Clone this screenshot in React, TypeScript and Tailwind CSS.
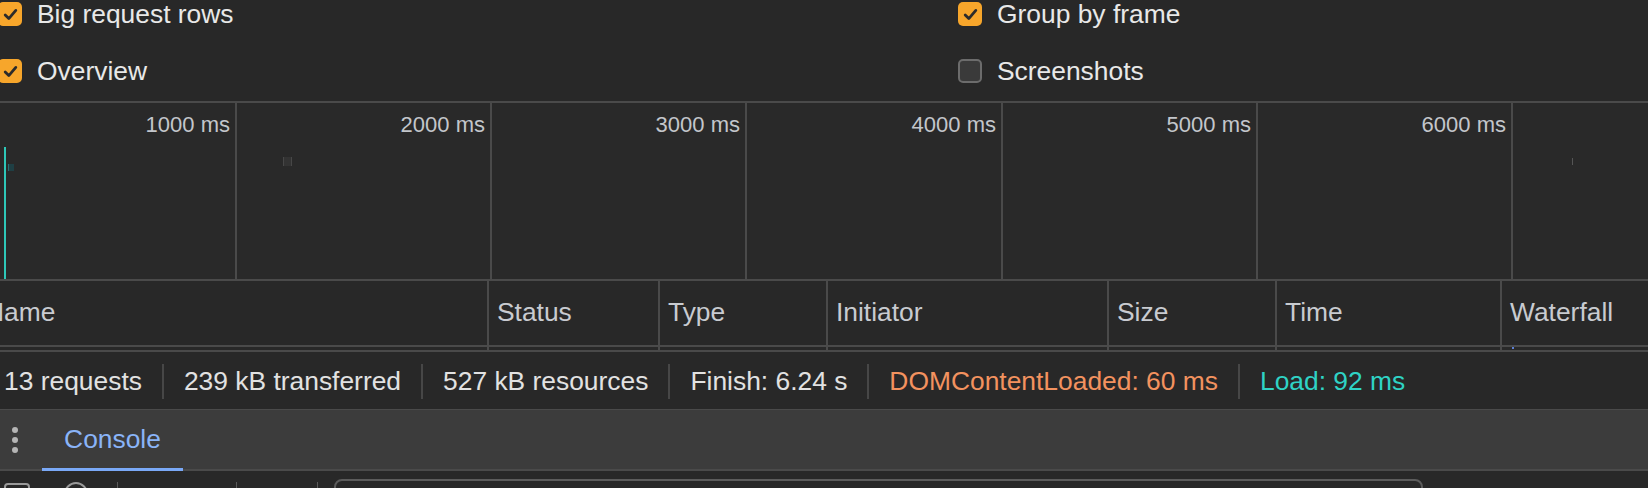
import React from "react";

function Box({ checked }: { checked: boolean }) {
  if (checked) {
    return (
      <div className="w-[24px] h-[24px] shrink-0 rounded-[5px] bg-[#f7a62b] flex items-center justify-center">
        <svg width="17" height="17" viewBox="0 0 17 17">
          <path d="M3.2 9 L6.8 12.6 L13.8 4.4" stroke="#2b2b2b" strokeWidth="2.8" fill="none" strokeLinecap="round" strokeLinejoin="round" />
        </svg>
      </div>
    );
  }
  return <div className="w-[24px] h-[24px] shrink-0 rounded-[5px] bg-[#3a3a3a] border-2 border-[#6c6c6c]" />;
}

function Opt({ checked, label }: { checked: boolean; label: string }) {
  return (
    <div className="h-[28px] flex items-center gap-[15px]">
      <Box checked={checked} />
      <span className="text-[26.4px] leading-[28px] text-[#e8e8e8] whitespace-nowrap">{label}</span>
    </div>
  );
}

const ticks = [
  { w: "w-[237px]", label: "1000 ms" },
  { w: "w-[255px]", label: "2000 ms" },
  { w: "w-[255px]", label: "3000 ms" },
  { w: "w-[256px]", label: "4000 ms" },
  { w: "w-[255px]", label: "5000 ms" },
  { w: "w-[255px]", label: "6000 ms" },
];

const cols = [
  { w: "w-[489px]", label: "Name", first: true },
  { w: "w-[171px]", label: "Status" },
  { w: "w-[168px]", label: "Type" },
  { w: "w-[281px]", label: "Initiator" },
  { w: "w-[168px]", label: "Size" },
  { w: "w-[225px]", label: "Time" },
];

function Sep() {
  return <div className="w-[2px] h-[35px] bg-[#474747] shrink-0" />;
}

export default function App() {
  return (
    <div className="w-[1648px] h-[488px] overflow-hidden bg-[#282828] font-['Liberation_Sans',Arial,sans-serif] relative">
      {/* settings */}
      <div className="h-[101px] flex">
        <div className="w-[960px] ml-[-2px] flex flex-col gap-[29px]">
          <Opt checked label="Big request rows" />
          <Opt checked label="Overview" />
        </div>
        <div className="flex flex-col gap-[29px]">
          <Opt checked label="Group by frame" />
          <Opt checked={false} label="Screenshots" />
        </div>
      </div>

      {/* overview */}
      <div className="h-[180px] border-y-2 border-[#4a4a4a] bg-[#292929] flex relative">
        {ticks.map((t) => (
          <div key={t.label} className={`${t.w} shrink-0 h-full border-r-2 border-[#4a4a4a] pt-[9px] pr-[5px] text-right text-[22px] leading-[26px] text-[#c3c6cb]`}>
            {t.label}
          </div>
        ))}
        <div className="flex-1" />
        <div className="absolute left-[4px] top-[44px] bottom-0 w-[2px] bg-[#2ec7b8]" />
        <div className="absolute left-[8px] top-[61px] w-[6px] h-[7px] bg-[#1f3f44] border-l border-[#2b6e72]" />
        <div className="absolute left-[283px] top-[54px] w-[9px] h-[9px] bg-[#333] border-x border-[#474747]" />
        <div className="absolute left-[1572px] top-[55px] w-[1px] h-[7px] bg-[#555]" />
      </div>

      {/* table header */}
      <div className="flex h-[66px] border-b-2 border-[#4a4a4a]">
        {cols.map((c) => (
          <div key={c.label} className={`${c.w} shrink-0 border-r-2 border-[#4a4a4a] flex items-center ${c.first ? "pl-0" : "pl-[8px]"} overflow-hidden`}>
            <span className={`text-[26.4px] text-[#c8cbd0] whitespace-nowrap ${c.first ? "ml-[-15px]" : ""}`}>{c.label}</span>
          </div>
        ))}
        <div className="flex-1 flex items-center pl-[8px]">
          <span className="text-[26.4px] text-[#c8cbd0] whitespace-nowrap">Waterfall</span>
        </div>
      </div>
      <div className="flex h-[5px] border-b-2 border-[#4a4a4a] relative">
        {cols.map((c) => (
          <div key={c.label} className={`${c.w} shrink-0 border-r-2 border-[#4a4a4a] h-full`} />
        ))}
        <div className="absolute left-[1512px] top-0 w-[2px] h-[2px] bg-[#5b7fd6]" />
      </div>

      {/* status bar */}
      <div className="h-[57px] pt-[2px] flex items-center text-[26.4px] text-[#e2e2e2] whitespace-nowrap">
        <span className="pl-[4px] pr-[20px]">13 requests</span>
        <Sep />
        <span className="px-[20px]">239 kB transferred</span>
        <Sep />
        <span className="px-[20px]">527 kB resources</span>
        <Sep />
        <span className="px-[20px]">Finish: 6.24 s</span>
        <Sep />
        <span className="px-[20px] text-[#f3925f]">DOMContentLoaded: 60 ms</span>
        <Sep />
        <span className="px-[20px] text-[#2fd3c5]">Load: 92 ms</span>
      </div>

      {/* drawer tab bar */}
      <div className="h-[62px] border-t border-b-2 border-t-[#4a4a4a] border-b-[#4a4a4a] bg-[#3c3c3c] flex items-stretch">
        <div className="w-[42px] flex flex-col items-center justify-center gap-[4px] pr-[12px]">
          <div className="w-[6px] h-[6px] rounded-full bg-[#b5b5b5]" />
          <div className="w-[6px] h-[6px] rounded-full bg-[#b5b5b5]" />
          <div className="w-[6px] h-[6px] rounded-full bg-[#b5b5b5]" />
        </div>
        <div className="relative w-[141px] flex items-center justify-center pt-[1px]">
          <span className="text-[26.4px] text-[#8ab4f8]">Console</span>
          <div className="absolute left-0 right-0 bottom-[-2px] h-[3px] bg-[#7aa9f7]" />
        </div>
      </div>

      {/* console toolbar */}
      <div className="h-[40px] flex items-start">
        <div className="w-[26px] h-[22px] mt-[12px] ml-[4px] rounded-[4px] border-2 border-[#9a9a9a] shrink-0" />
        <div className="w-[24px] h-[24px] mt-[11px] ml-[34px] rounded-full border-2 border-[#9a9a9a] shrink-0" />
        <div className="w-[1px] h-[24px] mt-[11px] ml-[29px] bg-[#5a5a5a] shrink-0" />
        <div className="w-[1px] h-[24px] mt-[11px] ml-[118px] bg-[#5a5a5a] shrink-0" />
        <div className="w-[1px] h-[24px] mt-[11px] ml-[80px] bg-[#5a5a5a] shrink-0" />
        <div className="w-[1089px] h-[40px] mt-[8px] ml-[16px] rounded-[8px] border-2 border-[#5c5c5c] shrink-0" />
      </div>
    </div>
  );
}
